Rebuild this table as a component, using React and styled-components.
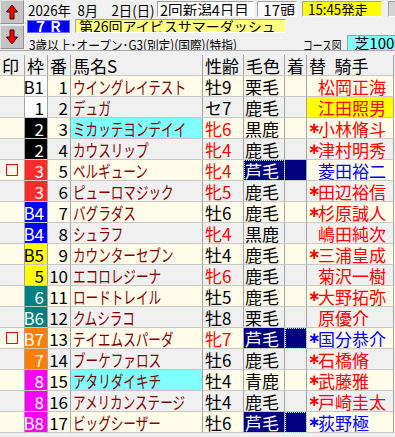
import React from "react";
import styled, { createGlobalStyle } from "styled-components";

const GlobalStyle = createGlobalStyle`
  html, body {
    margin: 0;
    padding: 0;
    width: 395px;
    height: 437px;
    overflow: hidden;
    background: #f0f0f0;
    font-family: "Noto Sans CJK JP", "Noto Sans", sans-serif;
  }
`;

const FRAME = {
  1: ["#ffffff", "#000000"],
  2: ["#000000", "#ffffff"],
  3: ["#ff2a2a", "#ffffff"],
  4: ["#0000ff", "#ffffff"],
  5: ["#ffff00", "#000000"],
  6: ["#008080", "#ffffff"],
  7: ["#ff8000", "#ffffff"],
  8: ["#ff00ff", "#ffffff"],
};

const horses = [
  { mark: false, frame: 1, fl: "B1", no: 1, name: "ウイングレイテスト", sex: "牡9", coat: "栗毛", alt: "", jockey: "松岡正海" },
  { mark: false, frame: 1, fl: "1", no: 2, name: "デュガ", sex: "セ7", coat: "鹿毛", alt: "", jockey: "江田照男", jHl: true },
  { mark: false, frame: 2, fl: "2", no: 3, name: "ミカッテヨンデイイ", hl: true, sex: "牝6", coat: "黒鹿", alt: "∗", jockey: "小林脩斗" },
  { mark: false, frame: 2, fl: "2", no: 4, name: "カウスリップ", sex: "牝4", coat: "鹿毛", alt: "∗", jockey: "津村明秀" },
  { mark: true, frame: 3, fl: "3", no: 5, name: "ベルギューン", sex: "牝4", coat: "芦毛", grey: "coat", alt: "", jockey: "菱田裕二", blue: true },
  { mark: false, frame: 3, fl: "3", no: 6, name: "ピューロマジック", sex: "牝5", coat: "鹿毛", alt: "∗", jockey: "田辺裕信" },
  { mark: false, frame: 4, fl: "B4", no: 7, name: "バグラダス", sex: "牡6", coat: "鹿毛", alt: "∗", jockey: "杉原誠人" },
  { mark: false, frame: 4, fl: "B4", no: 8, name: "シュラフ", sex: "牝4", coat: "黒鹿", alt: "", jockey: "嶋田純次" },
  { mark: false, frame: 5, fl: "B5", no: 9, name: "カウンターセブン", sex: "牡4", coat: "鹿毛", alt: "∗", jockey: "三浦皇成" },
  { mark: false, frame: 5, fl: "5", no: 10, name: "エコロレジーナ", sex: "牝6", coat: "鹿毛", alt: "", jockey: "菊沢一樹" },
  { mark: false, frame: 6, fl: "6", no: 11, name: "ロードトレイル", sex: "牡5", coat: "鹿毛", alt: "∗", jockey: "大野拓弥" },
  { mark: false, frame: 6, fl: "B6", no: 12, name: "クムシラコ", sex: "牡8", coat: "栗毛", alt: "", jockey: "原優介" },
  { mark: true, frame: 7, fl: "B7", no: 13, name: "テイエムスパーダ", sex: "牝7", coat: "芦毛", grey: "finish", alt: "∗", jockey: "国分恭介", blue: true },
  { mark: false, frame: 7, fl: "7", no: 14, name: "ブーケファロス", sex: "牡6", coat: "鹿毛", alt: "∗", jockey: "石橋脩" },
  { mark: false, frame: 8, fl: "8", no: 15, name: "アタリダイキチ", hl: true, sex: "牡4", coat: "青鹿", alt: "∗", jockey: "武藤雅" },
  { mark: false, frame: 8, fl: "8", no: 16, name: "アメリカンステージ", sex: "牡4", coat: "鹿毛", alt: "∗", jockey: "戸崎圭太" },
  { mark: false, frame: 8, fl: "B8", no: 17, name: "ビッグシーザー", sex: "牡6", coat: "芦毛", grey: "finish", alt: "∗", jockey: "荻野極", blue: true },
];

/* ---------- top panel ---------- */

const Top = styled.div`
  display: flex;
  height: 50px;
  border-bottom: 1px solid #a8a8a8;
`;

const ArrowCol = styled.div`
  width: 24px;
  flex: none;
  display: flex;
  flex-direction: column;
  gap: 1px;
`;

const ArrowBtn = styled.div`
  height: 24px;
  box-sizing: border-box;
  background: #c4c4c4;
  border-top: 1px solid #e4e4e4;
  border-left: 1px solid #e4e4e4;
  border-bottom: 1px solid #909090;
  border-right: 1px solid #909090;
  display: flex;
  align-items: center;
  justify-content: center;
`;

const Info = styled.div`
  flex: 1;
  min-width: 0;
  display: flex;
  flex-direction: column;
  gap: 2px;
  padding: 1px 0 0 3px;
  overflow: hidden;
`;

const InfoRow = styled.div`
  display: flex;
  align-items: center;
  height: ${(p) => p.$h}px;
  white-space: nowrap;
`;

const Slot = styled.div`
  flex: none;
  width: ${(p) => p.$w}px;
  padding-left: ${(p) => p.$pl || 0}px;
  box-sizing: border-box;
  overflow: hidden;
  color: #000;
`;

const Box = styled.div`
  box-sizing: border-box;
  width: ${(p) => p.$w}px;
  height: ${(p) => p.$h || 16}px;
  margin-left: ${(p) => p.$ml || 0}px;
  flex: none;
  background: ${(p) => p.$bg};
  color: ${(p) => p.$fg || "#000"};
  font-size: ${(p) => p.$fs || 14}px;
  border-top: 1px solid #a0a0a0;
  border-left: 1px solid #a0a0a0;
  border-bottom: 1px solid #ffffff;
  border-right: 1px solid #ffffff;
  display: flex;
  align-items: center;
  justify-content: ${(p) => p.$justify || "flex-start"};
  padding: 0 ${(p) => p.$px ?? 3}px;
  overflow: hidden;
  line-height: 1;
`;

const RaceNo = styled.div`
  box-sizing: border-box;
  flex: none;
  width: 43px;
  height: 13px;
  background: #0000ff;
  color: #ffffff;
  font-size: 14px;
  font-weight: bold;
  border: 1px solid #6a6aff;
  display: flex;
  align-items: center;
  justify-content: center;
  line-height: 1;
  letter-spacing: 1px;
`;

const Condensed = styled.span`
  display: inline-block;
  font-size: ${(p) => p.$fs}px;
  transform: scaleX(${(p) => p.$sx});
  transform-origin: left center;
  white-space: nowrap;
  line-height: 1;
  text-decoration: ${(p) => (p.$link ? "underline" : "none")};
  text-underline-offset: 2px;
`;

/* ---------- table ---------- */

const Table = styled.div`
  margin-top: 4px;
`;

const Grid = styled.div`
  display: grid;
  grid-template-columns: 25px 23px 23px 132px 41px 41px 22px 87px;
  height: 21px;
  background: ${(p) => (p.$alt ? "#f0f0f0" : "#fffcea")};
`;

const Cell = styled.div`
  box-sizing: border-box;
  border-right: 1px solid #a4a4a4;
  border-bottom: 1px solid #c8c8c8;
  display: flex;
  align-items: center;
  overflow: hidden;
  white-space: nowrap;
  font-size: 17px;
  line-height: 1;
  color: #000;
`;

const HeadCell = styled(Cell)`
  padding-left: 2px;
  background: #f0f0f0;
`;

const MarkCell = styled(Cell)`
  justify-content: center;
`;

const Square = styled.span`
  box-sizing: border-box;
  width: 12px;
  height: 12px;
  border: 1px solid #ff0000;
`;

const FrameCell = styled(Cell)`
  justify-content: flex-end;
  padding-right: 3px;
  background: ${(p) => p.$bg};
  color: ${(p) => p.$fg};
`;

const NumCell = styled(Cell)`
  justify-content: flex-end;
  padding-right: 2px;
`;

const NameCell = styled(Cell)`
  padding-left: 2px;
  color: #800000;
  background: ${(p) => (p.$hl ? "#80ffff" : "transparent")};
`;

const SexCell = styled(Cell)`
  padding-left: 2px;
  color: ${(p) => (p.$mare ? "#ff0000" : "#000")};
`;

const CoatCell = styled(Cell)`
  padding-left: 1px;
  background: ${(p) => (p.$grey ? "#000080" : "transparent")};
  color: ${(p) => (p.$grey ? "#ffffff" : "#000")};
  outline: ${(p) => (p.$focus ? "1px dotted #9fffff" : "none")};
  outline-offset: -1px;
`;

const FinishCell = styled(Cell)`
  background: ${(p) => (p.$grey ? "#000080" : "transparent")};
  outline: ${(p) => (p.$focus ? "1px dotted #9fffff" : "none")};
  outline-offset: -1px;
`;

const JockeyCell = styled(Cell)`
  padding-left: 1px;
  background: ${(p) => (p.$hl ? "#ffff00" : "transparent")};
  color: ${(p) => (p.$blue ? "#0000ff" : "#ff0000")};
`;

const AltMark = styled.span`
  display: inline-block;
  flex: none;
  width: 10px;
  font-family: "DejaVu Sans", sans-serif;
  font-weight: bold;
  font-size: 15px;
`;

const Arrow = ({ down }) => (
  <svg width="12" height="16" viewBox="0 0 12 16">
    <polygon
      points={down ? "6,15 0.5,8 4,8 4,1 8,1 8,8 11.5,8" : "6,1 0.5,8 4,8 4,15 8,15 8,8 11.5,8"}
      fill="#ff0000"
      stroke="#3a0000"
      strokeWidth="1"
    />
  </svg>
);

function HorseRow({ h, index }) {
  const [bg, fg] = FRAME[h.frame];
  return (
    <Grid $alt={index % 2 === 1}>
      <MarkCell>{h.mark && <Square />}</MarkCell>
      <FrameCell $bg={bg} $fg={fg}>{h.fl}</FrameCell>
      <NumCell>{h.no}</NumCell>
      <NameCell $hl={h.hl}>
        <Condensed $fs={17} $sx={0.74}>{h.name}</Condensed>
      </NameCell>
      <SexCell $mare={h.sex.startsWith("牝")}>{h.sex}</SexCell>
      <CoatCell $grey={!!h.grey} $focus={h.grey === "coat"}>{h.coat}</CoatCell>
      <FinishCell $grey={!!h.grey} $focus={h.grey === "finish"} />
      <JockeyCell $hl={h.jHl} $blue={h.blue}>
        <AltMark>{h.alt}</AltMark>
        {h.jockey}
      </JockeyCell>
    </Grid>
  );
}

export default function App() {
  return (
    <>
      <GlobalStyle />
      <Top>
        <ArrowCol>
          <ArrowBtn><Arrow /></ArrowBtn>
          <ArrowBtn><Arrow down /></ArrowBtn>
        </ArrowCol>
        <Info>
          <InfoRow $h={16}>
            <Slot $w={130} $pl={1}>
              <Condensed $fs={14} $sx={0.95}>2026年&#8194;8月&#8194;&#8194;2日(日)</Condensed>
            </Slot>
            <Box $w={97} $bg="#ffffff" $px={2}>
              <Condensed $fs={15} $sx={0.97}>2回新潟4日目</Condensed>
            </Box>
            <Box $w={40} $ml={3} $bg="#ffffff" $fs={15} $justify="flex-end" $px={1}>17頭</Box>
            <Box $w={80} $ml={5} $bg="#ffff00" $px={5}>
              <Condensed $fs={14} $sx={0.95}>15:45発走</Condensed>
            </Box>
            <Box $w={20} $ml={6} $bg="#d4d4d4" />
          </InfoRow>
          <InfoRow $h={14}>
            <RaceNo>７Ｒ</RaceNo>
            <Box $w={211} $h={14} $ml={5} $bg="#ffff80" $fs={14}>第26回アイビスサマーダッシュ</Box>
          </InfoRow>
          <InfoRow $h={15}>
            <Slot $w={276} $pl={2}>
              <Condensed $fs={13} $sx={0.9}>3歳以上･オープン･G3(別定)(国際)(特指)</Condensed>
            </Slot>
            <Slot $w={44}>
              <Condensed $fs={13} $sx={0.75} $link>コース図</Condensed>
            </Slot>
            <Box $w={60} $bg="#80ffff" $fs={15}>&nbsp;芝1000</Box>
          </InfoRow>
        </Info>
      </Top>
      <Table>
        <Grid $alt>
          <HeadCell>印</HeadCell>
          <HeadCell>枠</HeadCell>
          <HeadCell>番</HeadCell>
          <HeadCell>馬名S</HeadCell>
          <HeadCell>性齢</HeadCell>
          <HeadCell>毛色</HeadCell>
          <HeadCell>着</HeadCell>
          <HeadCell>替&#8194;騎手</HeadCell>
        </Grid>
        {horses.map((h, i) => (
          <HorseRow key={h.no} h={h} index={i} />
        ))}
      </Table>
    </>
  );
}
